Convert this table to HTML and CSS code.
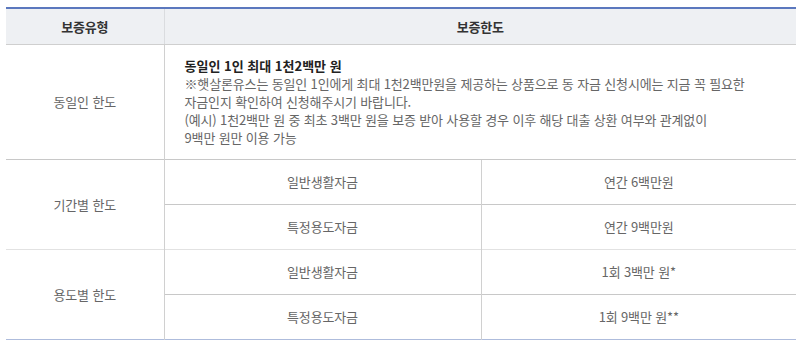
FILE: index.html
```html
<!DOCTYPE html>
<html lang="ko">
<head>
<meta charset="utf-8">
<link rel="stylesheet" href="styles.css">
</head>
<body>
<div class="wrap">
<table class="limit-table">
  <colgroup>
    <col class="c1">
    <col class="c2">
    <col class="c3">
  </colgroup>
  <thead>
    <tr class="head-row">
      <th>보증유형</th>
      <th colspan="2">보증한도</th>
    </tr>
  </thead>
  <tbody>
    <tr class="row-main">
      <td class="type">동일인 한도</td>
      <td colspan="2" class="desc">
        <strong class="desc-title">동일인 1인 최대 1천2백만 원</strong>
        <p class="desc-text">※햇살론유스는 동일인 1인에게 최대 1천2백만원을 제공하는 상품으로 동 자금 신청시에는 지금 꼭 필요한<br>자금인지 확인하여 신청해주시기 바랍니다.<br>(예시) 1천2백만 원 중 최초 3백만 원을 보증 받아 사용할 경우 이후 해당 대출 상환 여부와 관계없이<br>9백만 원만 이용 가능</p>
      </td>
    </tr>
    <tr class="row-sub">
      <td class="type" rowspan="2">기간별 한도</td>
      <td>일반생활자금</td>
      <td>연간 6백만원</td>
    </tr>
    <tr class="row-sub">
      <td>특정용도자금</td>
      <td>연간 9백만원</td>
    </tr>
    <tr class="row-sub group-start">
      <td class="type" rowspan="2">용도별 한도</td>
      <td>일반생활자금</td>
      <td>1회 3백만 원*</td>
    </tr>
    <tr class="row-sub last">
      <td>특정용도자금</td>
      <td>1회 9백만 원**</td>
    </tr>
  </tbody>
</table>
</div>
</body>
</html>
```

FILE: styles.css
```css
html, body {
  margin: 0;
  padding: 0;
  background: #ffffff;
}

.wrap {
  padding: 7px 4px 0 6px;
}

.limit-table {
  width: 790px;
  border-collapse: collapse;
  table-layout: fixed;
  font-family: "Noto Sans CJK KR", "Noto Sans", sans-serif;
  font-size: 13px;
  letter-spacing: -0.15px;
  line-height: 18px;
  color: #666666;
  border-top: 2px solid #5b78be;
  border-bottom: 1px solid #aebcdc;
}

.c1 { width: 158px; }
.c2 { width: 317px; }
.c3 { width: 315px; }

.limit-table th,
.limit-table td {
  text-align: center;
  vertical-align: middle;
  padding: 0;
  border-left: 1px solid #d0d0d0;
  border-top: 1px solid #c8c8c8;
}

.limit-table th:first-child,
.limit-table tr > td.type {
  border-left: none;
}

.head-row th {
  height: 35px;
  background: #eef0f3;
  color: #333333;
  font-weight: bold;
  font-size: 13px;
  border-top: none;
  border-bottom: 1px solid #cfcfcf;
  border-left-color: #dadcdf;
}

.row-main td {
  height: 114px;
}

.limit-table td.desc {
  text-align: left;
  padding: 0 20px;
}

.desc-title {
  display: block;
  color: #222222;
  font-weight: bold;
  font-size: 13px;
  letter-spacing: 0;
}

.desc-text {
  margin: 0;
}

.row-sub td {
  height: 44px;
}

.group-start td {
  border-top-color: #e2e2e2;
}
```
